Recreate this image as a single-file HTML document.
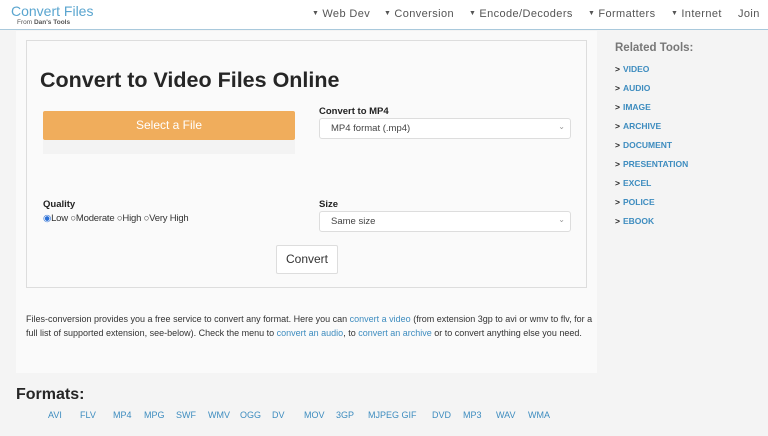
<!DOCTYPE html>
<html><head><style>
*{margin:0;padding:0;box-sizing:border-box}
body{width:768px;height:436px;overflow:hidden;background:#f4f4f4;font-family:"Liberation Sans",Arial,sans-serif;color:#222;position:relative}
.hdr{position:absolute;left:0;top:0;width:768px;height:30px;background:#fff;border-bottom:1px solid #a9c9dc}
.logo{position:absolute;left:11px;top:3px;font-size:14px;color:#5aa5cf}
.from{position:absolute;left:17px;top:19px;font-size:6.5px;color:#555}
.nav{position:absolute;top:8px;font-size:11px;color:#555;letter-spacing:.4px}
.nav i{font-style:normal;font-size:7px;vertical-align:2px;margin-right:3px}
.main{position:absolute;left:16px;top:31px;width:581px;height:342px;background:#fafafa}
.box{position:absolute;left:10px;top:9px;width:561px;height:248px;border:1px solid #ddd}
h1{position:absolute;left:13px;top:27px;font-size:21.5px;font-weight:bold;color:#262626}
.sel{position:absolute;left:16px;top:70px;width:252px;height:29px;background:#f0ad5c;color:#fff;font-size:12px;text-align:center;line-height:29px;border-radius:2px}
.selsh{position:absolute;left:16px;top:99px;width:252px;height:14px;background:#f3f3f3}
.lbl{position:absolute;font-size:9.5px;font-weight:bold}
.dd{position:absolute;left:292px;width:252px;height:21px;background:#fff;border:1px solid #ddd;border-radius:3px;font-size:9.5px;color:#444;padding-left:11px;line-height:19px}
.dd:after{content:"⌄";position:absolute;right:5px;top:-2px;font-size:8px;color:#999}
.radio{position:absolute;left:16px;top:172px;font-size:9.5px;color:#333;letter-spacing:-.2px}
.btn{position:absolute;left:249px;top:204px;width:62px;height:29px;background:#fff;border:1px solid #ddd;border-radius:2px;font-size:12px;text-align:center;line-height:27px;color:#333}
.p{position:absolute;left:10px;top:282px;width:570px;font-size:9px;line-height:13.5px;color:#333}
a{color:#3d8cbf;text-decoration:none}
.side{position:absolute;left:615px;top:42px;font-size:11.5px;font-weight:bold;color:#777}
.rl{position:absolute;left:615px;font-size:8.5px;font-weight:bold;color:#3d8cbf}
.rl b{color:#222;margin-right:3px;font-weight:900}
.fm{position:absolute;left:16px;top:386px;font-size:16px;font-weight:bold;color:#262626}
.fl{position:absolute;top:410px;font-size:9px;color:#3d8cbf}
</style></head><body>
<div class="hdr">
<div class="logo">Convert Files</div><div class="from">From <b>Dan's Tools</b></div>
<div class="nav" style="left:312px"><i>▼</i>Web Dev</div>
<div class="nav" style="left:384px"><i>▼</i>Conversion</div>
<div class="nav" style="left:469px"><i>▼</i>Encode/Decoders</div>
<div class="nav" style="left:588px"><i>▼</i>Formatters</div>
<div class="nav" style="left:671px"><i>▼</i>Internet</div>
<div class="nav" style="left:738px">Join</div>
</div>
<div class="main">
<div class="box">
<h1>Convert to Video Files Online</h1>
<div class="sel">Select a File</div><div class="selsh"></div>
<div class="lbl" style="left:292px;top:65px">Convert to MP4</div>
<div class="dd" style="top:77px">MP4 format (.mp4)</div>
<div class="lbl" style="left:16px;top:158px">Quality</div>
<div class="radio"><span style="color:#2a6fd6">◉</span>Low ○Moderate ○High ○Very High</div>
<div class="lbl" style="left:292px;top:158px">Size</div>
<div class="dd" style="top:170px">Same size</div>
<div class="btn">Convert</div>
</div>
<div class="p">Files-conversion provides you a free service to convert any format. Here you can <a>convert a video</a> (from extension 3gp to avi or wmv to flv, for a full list of supported extension, see-below). Check the menu to <a>convert an audio</a>, to <a>convert an archive</a> or to convert anything else you need.</div>
</div>
<div class="side">Related Tools:</div>
<div class="rl" style="top:64px"><b>&gt;</b>VIDEO</div>
<div class="rl" style="top:83px"><b>&gt;</b>AUDIO</div>
<div class="rl" style="top:102px"><b>&gt;</b>IMAGE</div>
<div class="rl" style="top:121px"><b>&gt;</b>ARCHIVE</div>
<div class="rl" style="top:140px"><b>&gt;</b>DOCUMENT</div>
<div class="rl" style="top:159px"><b>&gt;</b>PRESENTATION</div>
<div class="rl" style="top:178px"><b>&gt;</b>EXCEL</div>
<div class="rl" style="top:197px"><b>&gt;</b>POLICE</div>
<div class="rl" style="top:216px"><b>&gt;</b>EBOOK</div>
<div class="fm">Formats:</div>
<div class="fl" style="left:48px">AVI</div><div class="fl" style="left:80px">FLV</div>
<div class="fl" style="left:113px">MP4</div><div class="fl" style="left:144px">MPG</div>
<div class="fl" style="left:176px">SWF</div><div class="fl" style="left:208px">WMV</div>
<div class="fl" style="left:240px">OGG</div><div class="fl" style="left:272px">DV</div>
<div class="fl" style="left:304px">MOV</div><div class="fl" style="left:336px">3GP</div>
<div class="fl" style="left:368px">MJPEG GIF</div><div class="fl" style="left:432px">DVD</div>
<div class="fl" style="left:463px">MP3</div><div class="fl" style="left:496px">WAV</div>
<div class="fl" style="left:528px">WMA</div>
</body></html>
